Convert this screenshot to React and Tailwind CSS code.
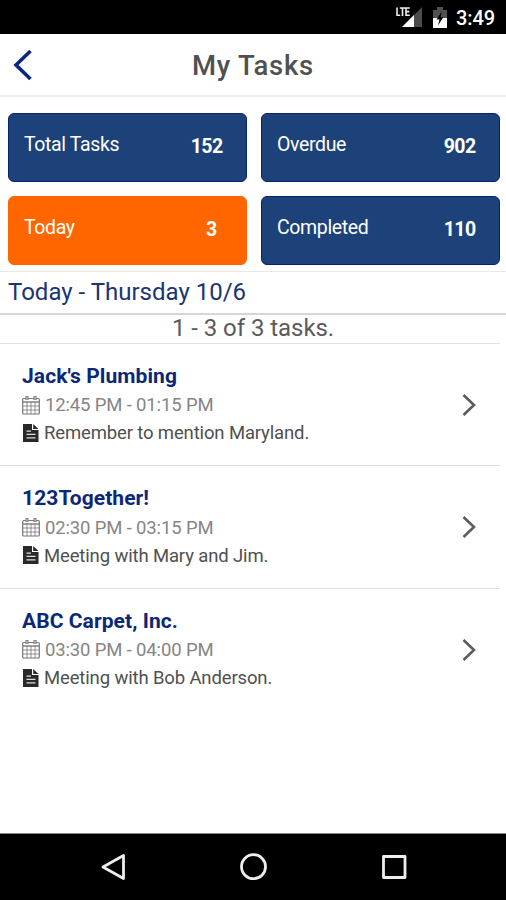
const stats = [
  { label: "Total Tasks", value: "152", tone: "bg-[#1d4279] border-[#07236f]", pad: "pr-[23px]" },
  { label: "Overdue", value: "902", tone: "bg-[#1d4279] border-[#07236f]", pad: "pr-[23px]" },
  { label: "Today", value: "3", tone: "bg-[#ff6600] border-[#ff6600]", pad: "pr-[29px]" },
  { label: "Completed", value: "110", tone: "bg-[#1d4279] border-[#07236f]", pad: "pr-[23px]" },
];

const tasks = [
  { name: "Jack's Plumbing", time: "12:45 PM - 01:15 PM", note: "Remember to mention Maryland." },
  { name: "123Together!", time: "02:30 PM - 03:15 PM", note: "Meeting with Mary and Jim." },
  { name: "ABC Carpet, Inc.", time: "03:30 PM - 04:00 PM", note: "Meeting with Bob Anderson." },
];

function StatusBar() {
  return (
    <div className="flex h-[34px] items-start bg-black pl-[395px] text-white">
      <svg className="mt-[6px] h-[22px] w-[27px] shrink-0" viewBox="0 0 27 22">
        <path d="M27 1V21H7Z" fill="#4b4b4b" />
        <path d="M19 9V21H7Z" fill="#fff" />
        <path d="M1 0H15.5V10.5H9L7 12H1Z" fill="#000" />
        <path d="M2 1.5V9.3H5.2M4.8 2H10.2M7.5 2V10M14.8 2H11V9.3H14.8M11 5.6H14.3" fill="none" stroke="#eee" strokeWidth="1.6" />
      </svg>
      <svg className="mt-[7px] ml-[11px] h-[21px] w-[14px] shrink-0" viewBox="0 0 14 21">
        <path d="M4 0H10V3H14V11H0V3H4Z" fill="#505050" />
        <path d="M0 11H14V21H0Z" fill="#fff" />
        <path d="M9 4L3.5 12.5H6.5L5 18.5L10.5 10H7.5Z" fill="#000" />
      </svg>
      <span className="mt-[6px] ml-[9px] text-[20px] leading-6 font-medium tracking-[-0.1px]">3:49</span>
    </div>
  );
}

function CalendarIcon() {
  return (
    <svg className="mb-px h-5 w-[18px] shrink-0" viewBox="0 0 18 20" fill="none" stroke="#777">
      <rect x=".7" y="3.5" width="16.6" height="15.5" rx="1" strokeWidth="1.2" />
      <path d="M1 7H17" strokeWidth="1.4" />
      <path d="M1 11H17M1 15H17M5 7V19M9 7V19M13 7V19" strokeWidth=".8" />
      <path d="M5 1V5M13 1V5" strokeWidth="3" />
      <path d="M5 1.7V4.5M13 1.7V4.5" stroke="#ddd" strokeWidth="1" />
    </svg>
  );
}

function NoteIcon() {
  return (
    <svg className="ml-px h-[18px] w-4 shrink-0" viewBox="0 0 16 18">
      <path d="M0 0H9V6H15.5V18H0Z" fill="#292929" />
      <path d="M10.2 0L15.5 5H10.2Z" fill="#292929" />
      <path d="M3.5 7.2H8M3.5 10.4H12.5M3.5 13.8H12.5" stroke="#ddd" strokeWidth="1.3" />
    </svg>
  );
}

function Task({ name, time, note, last }) {
  return (
    <div className={`mr-[6px] flex h-[122.4px] items-start justify-between border-b pr-[24px] pl-[22px] ${last ? "border-transparent" : "border-[#dfdfdf]"}`}>
      <div className="pt-[18px] whitespace-nowrap">
        <h2 className="h-[29px] text-[21px] leading-7 font-bold tracking-[0.08px] text-[#0b2878]">{name}</h2>
        <div className="flex h-7 items-center gap-[5px] text-[18.5px] tracking-[-0.15px] text-[#858585]">
          <CalendarIcon />
          <span className="pt-[2px]">{time}</span>
        </div>
        <div className="flex h-7 items-center gap-[5px] text-[18.5px] tracking-[-0.14px] text-[#505050]">
          <NoteIcon />
          <span className="pt-[2px]">{note}</span>
        </div>
      </div>
      <svg className="mt-[49px] h-6 w-[14px]" viewBox="0 0 14 24" fill="none" stroke="#5c5c5c" strokeWidth="2.6">
        <path d="M1.5 2L12 12L1.5 22" />
      </svg>
    </div>
  );
}

export default function App() {
  return (
    <div className="flex h-[900px] w-[506px] flex-col overflow-hidden bg-white font-[Roboto,sans-serif]">
      <StatusBar />
      <header className="grid h-[63px] grid-cols-[60px_1fr_60px] items-center border-b-2 border-[#eeeeee]">
        <svg className="mt-px ml-[12px] h-8 w-5" viewBox="0 0 20 32" fill="none" stroke="#08297b" strokeWidth="3.6">
          <path d="M18.5 2L4 16L18.5 30" />
        </svg>
        <h1 className="pt-[2px] text-center text-[27.5px] leading-8 font-medium tracking-[0.7px] text-[#505050]">My Tasks</h1>
      </header>
      <div className="grid h-[174px] grid-cols-2 content-start gap-x-[14px] gap-y-[14px] pt-4 pr-[6.5px] pl-[7.5px]">
        {stats.map((s) => (
          <div key={s.label} className={`flex h-[69px] items-start justify-between rounded-md border pt-[19px] pl-[15.5px] text-white ${s.tone} ${s.pad}`}>
            <span className="text-[19.5px] leading-6 tracking-[-0.37px]">{s.label}</span>
            <span className="mt-[2px] text-[19.5px] leading-6 font-bold tracking-[-0.6px]">{s.value}</span>
          </div>
        ))}
      </div>
      <div className="h-[44px] border-t border-b-2 border-t-[#e8e8e8] border-b-[#d6d6d6] pl-2 text-[24px] leading-[40px] text-[#1b3474]">Today - Thursday 10/6</div>
      <div className="mr-[6px] h-[29px] border-b border-[#e1e1e1] pl-[6px] text-center text-[24px] leading-[27px] tracking-[-0.05px] text-[#5b5b5b]">1 - 3 of 3 tasks.</div>
      <main className="flex-1">
        {tasks.map((t, i) => (
          <Task key={t.name} {...t} last={i === tasks.length - 1} />
        ))}
      </main>
      <nav className="flex h-[67px] items-center justify-between border-t border-[#888] bg-black pr-[98px] pl-[100px]">
        <svg className="h-7 w-7" viewBox="0 0 28 28" fill="none" stroke="#eee" strokeWidth="2.8" strokeLinejoin="round">
          <path d="M23.5 2.5V25.5L3 14Z" />
        </svg>
        <svg className="h-7 w-7" viewBox="0 0 28 28" fill="none" stroke="#eee" strokeWidth="2.8">
          <circle cx="13.5" cy="13.7" r="12" />
        </svg>
        <svg className="h-7 w-7" viewBox="0 0 28 28" fill="none" stroke="#eee" strokeWidth="2.8" strokeLinejoin="round">
          <rect x="3.5" y="3.5" width="21.5" height="21" />
        </svg>
      </nav>
    </div>
  );
}
